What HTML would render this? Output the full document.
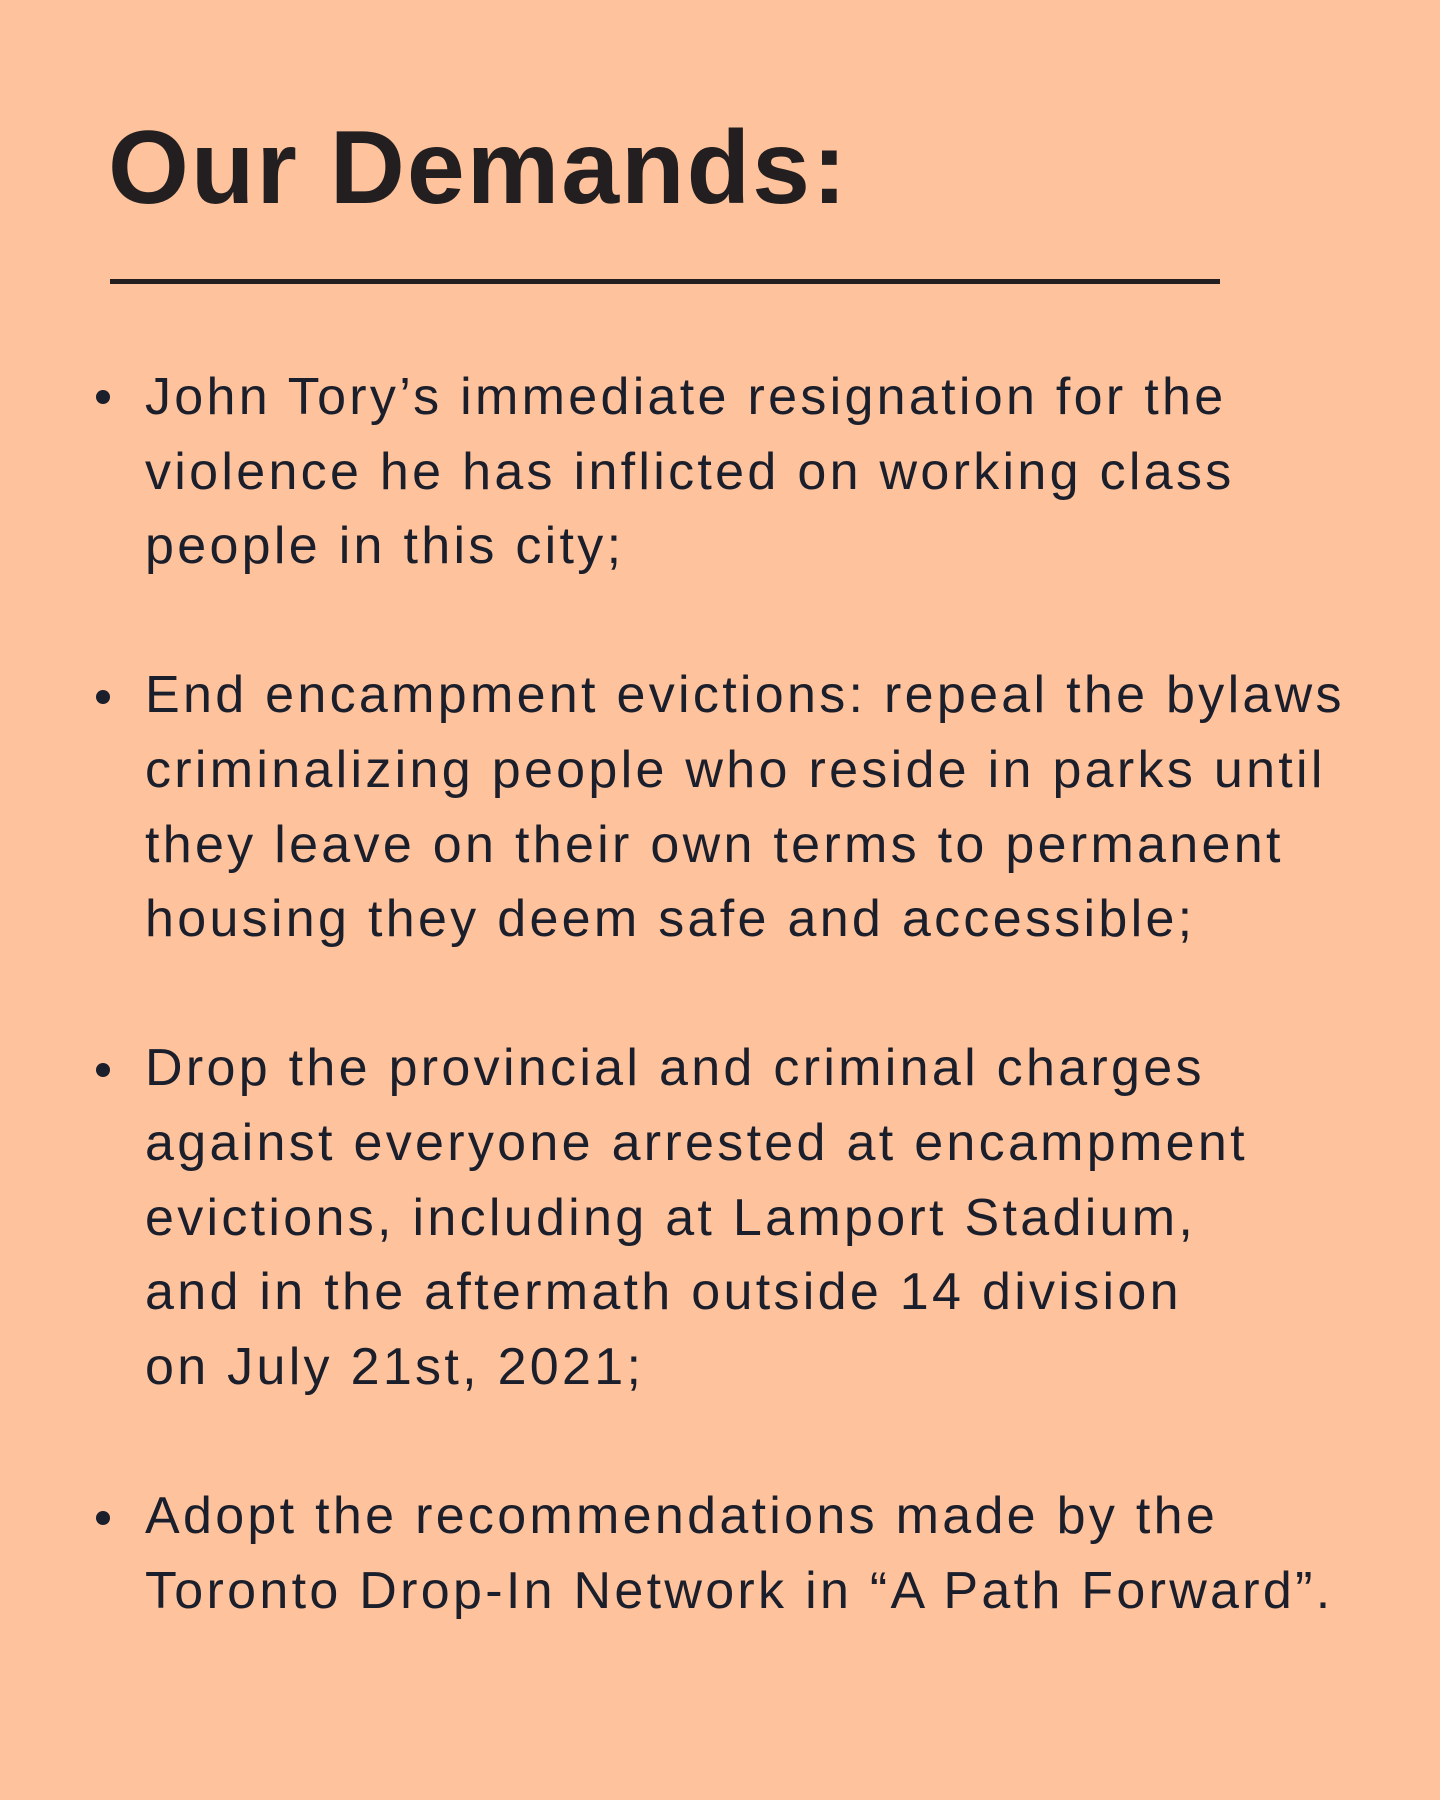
<!DOCTYPE html>
<html><head><meta charset="utf-8"><style>
html,body{margin:0;padding:0}
body{width:1440px;height:1800px;background:#fec29c;position:relative;overflow:hidden;font-family:"Liberation Sans",sans-serif;color:#1b1e2b}
h1{position:absolute;left:108px;top:108px;margin:0;font-size:104px;font-weight:bold;letter-spacing:2px;color:#231f20;line-height:120px}
.rule{position:absolute;left:110px;top:279px;width:1110px;height:5px;background:#231f20}
.list{position:absolute;left:145px;top:360px;font-size:52px;line-height:74.6px;white-space:nowrap;letter-spacing:3.3px}
.b{position:absolute;left:96px;width:14px;height:14px;border-radius:50%;background:#1b1e2b}
</style></head><body>
<h1>Our Demands:</h1>
<div class="rule"></div>
<div class="b" style="top:390px"></div>
<div class="b" style="top:690px"></div>
<div class="b" style="top:1063px"></div>
<div class="b" style="top:1511px"></div>
<div class="list">
John Tory’s immediate resignation for the<br>
violence he has inflicted on working class<br>
people in this city;<br>
&nbsp;<br>
End encampment evictions: repeal the bylaws<br>
criminalizing people who reside in parks until<br>
they leave on their own terms to permanent<br>
housing they deem safe and accessible;<br>
&nbsp;<br>
Drop the provincial and criminal charges<br>
against everyone arrested at encampment<br>
evictions, including at Lamport Stadium,<br>
and in the aftermath outside 14 division<br>
on July 21st, 2021;<br>
&nbsp;<br>
Adopt the recommendations made by the<br>
Toronto Drop-In Network in “A Path Forward”.
</div>
</body></html>
